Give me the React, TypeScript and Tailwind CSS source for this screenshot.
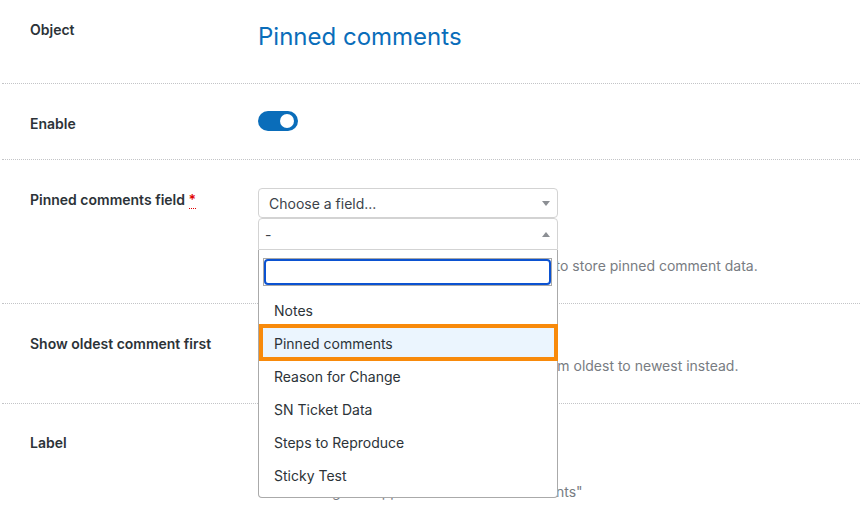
import React from "react";

const font = { fontFamily: "Inter, 'Liberation Sans', sans-serif" };

function Sep() {
  return <div className="ml-[2px] border-t border-dotted border-[#c3c4c7]" />;
}

export default function App() {
  const items = [
    "Notes",
    "Pinned comments",
    "Reason for Change",
    "SN Ticket Data",
    "Steps to Reproduce",
    "Sticky Test",
  ];
  return (
    <div
      className="w-[860px] h-[528px] overflow-hidden bg-white text-[#2c3338]"
      style={font}
    >
      {/* Row 1 */}
      <div className="flex h-[83px]">
        <div className="w-[258px] pl-[30px] pt-[20px] text-[14px] leading-[20px] font-semibold">
          Object
        </div>
        <div className="pt-[22px] text-[24px] leading-[30px] text-[#0a6dba]">
          Pinned comments
        </div>
      </div>
      <Sep />
      {/* Row 2 */}
      <div className="flex h-[75px]">
        <div className="w-[258px] pl-[30px] pt-[30px] text-[14px] leading-[20px] font-semibold">
          Enable
        </div>
        <div className="pt-[27px]">
          <div className="w-[40px] h-[20px] rounded-full bg-[#0a6dba] flex items-center justify-end pr-[4px]">
            <div className="w-[14px] h-[14px] rounded-full bg-white" />
          </div>
        </div>
      </div>
      <Sep />
      {/* Row 3 */}
      <div className="flex h-[143px]">
        <div className="w-[258px] pl-[30px] pt-[30px] text-[14px] leading-[20px] font-semibold">
          Pinned comments field{" "}
          <abbr className="text-[#e00000] no-underline border-b border-dotted border-[#e00000]">
            *
          </abbr>
        </div>
        <div className="pt-[28px] flex-1">
          <div className="relative w-[300px] z-10">
            <div className="h-[30px] border border-[#d3d3d3] rounded-[4px] flex items-center pl-[10px] pr-[7px] text-[14px] text-[#3c434a]">
              <span className="flex-1">Choose a field...</span>
              <span className="w-0 h-0 border-l-[4px] border-r-[4px] border-t-[5px] border-l-transparent border-r-transparent border-t-[#8c8f94]" />
            </div>
            <div className="h-[32px] border border-[#d3d3d3] rounded-t-[4px] flex items-center pl-[6px] pr-[7px] text-[14px] text-[#3c434a]">
              <span className="flex-1">-</span>
              <span className="w-0 h-0 border-l-[4px] border-r-[4px] border-b-[5px] border-l-transparent border-r-transparent border-b-[#8c8f94]" />
            </div>
            {/* open dropdown panel */}
            <div className="absolute left-0 top-full w-[300px] bg-white border-x border-b border-[#aaaaaa] rounded-b-[4px] pt-[8px] pb-[5px]">
              <div className="mx-[4px] mr-[5px] h-[28px] border border-[#a8a8a8]">
                <div className="h-full border-2 border-[#0b52d1] rounded-[4px]" />
              </div>
              <div className="mt-[8px]">
                {items.map((it) => (
                  <div
                    key={it}
                    className={
                      "relative h-[33px] flex items-center pl-[15px] text-[14px] text-[#2c3338] " +
                      (it === "Pinned comments" ? "bg-[#ebf5fe]" : "")
                    }
                  >
                    {it}
                    {it === "Pinned comments" && (
                      <div className="absolute top-[-3px] bottom-[-1px] left-0 right-[-1px] border-4 border-[#f88a0b]" />
                    )}
                  </div>
                ))}
              </div>
            </div>
          </div>
          <div className="mt-[6px] text-[14px] leading-[20px] text-[#787c82] whitespace-nowrap">
            Select a multi-line text field that is then used to store pinned comment data.
          </div>
        </div>
      </div>
      <Sep />
      {/* Row 4 */}
      <div className="flex h-[99px]">
        <div className="w-[258px] pl-[30px] pt-[30px] text-[14px] leading-[20px] font-semibold">
          Show oldest comment first
        </div>
        <div className="pt-[30px]">
          <div className="w-[40px] h-[20px] rounded-full bg-[#c3c4c7] flex items-center pl-[3px]">
            <div className="w-[14px] h-[14px] rounded-full bg-white" />
          </div>
          <div className="mt-[2px] text-[14px] leading-[20px] text-[#787c82] whitespace-nowrap">
            Enable this to re-sort the list of comments from oldest to newest instead.
          </div>
        </div>
      </div>
      <Sep />
      {/* Row 5 */}
      <div className="flex h-[130px]">
        <div className="w-[258px] pl-[30px] pt-[29px] text-[14px] leading-[20px] font-semibold">
          Label
        </div>
        <div className="pt-[24px]">
          <div className="w-[300px] h-[30px] border border-[#8c8f94] rounded-[4px]" />
          <div className="mt-[24px] text-[14px] leading-[20px] text-[#787c82] whitespace-nowrap">
            The heading that appears as "Pinned comments"
          </div>
        </div>
      </div>
    </div>
  );
}
